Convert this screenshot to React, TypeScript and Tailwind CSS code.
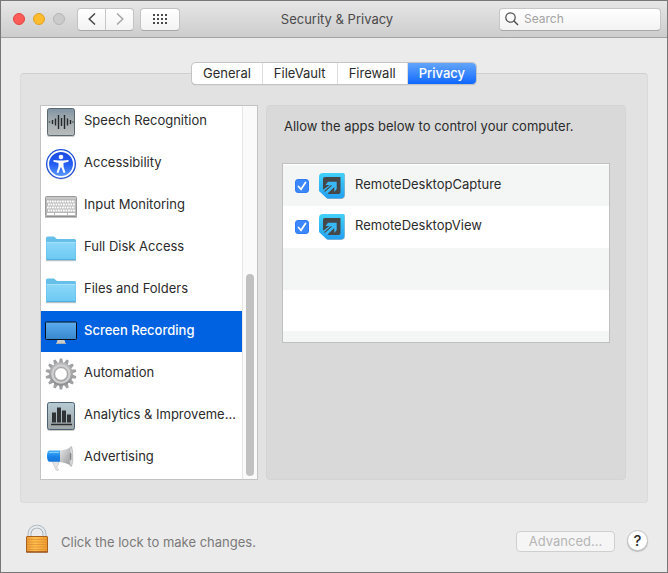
import { useState } from 'react';
import type { ReactNode } from 'react';
import clsx from 'clsx';

const SpeechIcon = (): ReactNode => (
  <svg width="32" height="32" viewBox="0 0 32 32" aria-hidden="true">
    <defs>
      <linearGradient id="speech-bg" x1="0" y1="0" x2="0" y2="1">
        <stop offset="0" stopColor="#7d93a6" />
        <stop offset="0.3" stopColor="#9aa5ab" />
        <stop offset="1" stopColor="#b9bcbc" />
      </linearGradient>
    </defs>
    <rect x="2" y="3" width="28" height="28" rx="2" fill="#000" opacity="0.2" />
    <rect x="2.5" y="2.5" width="27" height="27" rx="2" fill="url(#speech-bg)" stroke="#5b6870" />
    <path
      d="M4.5 15.5v1M7.500 14v4M10.500 12.500v7M13.500 9v14M16.500 12v8M19.500 9v14M22.500 12.500v7M25.500 14v4M28 15.500v1"
      stroke="#24282b"
      strokeWidth="1.400"
    />
  </svg>
);

const AccessibilityIcon = (): ReactNode => (
  <svg width="32" height="32" viewBox="0 0 32 32" aria-hidden="true">
    <defs>
      <linearGradient id="access-bg" x1="0" y1="0" x2="0" y2="1">
        <stop offset="0" stopColor="#1a4ce0" />
        <stop offset="0.5" stopColor="#235cf2" />
        <stop offset="1" stopColor="#5b9cff" />
      </linearGradient>
    </defs>
    <circle cx="16" cy="17" r="14.500" fill="#000" opacity="0.2" />
    <circle cx="16" cy="16" r="15" fill="#2252d6" />
    <circle cx="16" cy="16" r="12.800" fill="url(#access-bg)" stroke="#fff" strokeWidth="1.700" />
    <circle cx="16" cy="9" r="2.300" fill="#fff" />
    <path
      d="M8.500 11.900l5.500 0.600h4l5.500-0.600v1.800l-5 1.200v3.600l1.900 6-1.800 0.600-2.200-5.600h-0.800l-2.200 5.600-1.800-0.600 1.900-6v-3.600l-5-1.200z"
      fill="#fff"
    />
  </svg>
);

const KeyboardIcon = (): ReactNode => (
  <svg width="32" height="32" viewBox="0 0 32 32" aria-hidden="true">
    <rect x="0.500" y="6.500" width="31" height="20" rx="1" fill="#b9b9b9" stroke="#999" />
    <path d="M1 8h30" stroke="#c6c6c6" strokeWidth="2" />
    <path d="M0 27h32" stroke="#808080" />
    <path
      d="M2 11.500h28M3 14.500h27M2 17.500h28M3 20.500h27"
      stroke="#fff"
      strokeWidth="2"
      strokeDasharray="1.800 0.700"
    />
    <path d="M2 24h7M10 24h12M23 24h7" stroke="#fff" strokeWidth="2.200" />
  </svg>
);

const FolderIcon = ({ id }: { id: string }): ReactNode => (
  <svg width="32" height="32" viewBox="0 0 32 32" aria-hidden="true">
    <defs>
      <linearGradient id={id} x1="0" y1="0" x2="0" y2="1">
        <stop offset="0" stopColor="#8bd7f8" />
        <stop offset="1" stopColor="#6cc9f3" />
      </linearGradient>
    </defs>
    <path d="M1 28.500h30" stroke="#b5c4cb" strokeWidth="1.500" />
    <path
      d="M1 27V6q0-1.500 1.500-1.500h6q1 0 1.700 0.900l0.700 0.900q0.600 0.700 1.600 0.700H29.500q1.500 0 1.500 1.500V27q0 1-1 1H2q-1 0-1-1z"
      fill="#65bfe8"
    />
    <path d="M1.500 10.500h29v16q0 1-1 1h-27q-1 0-1-1z" fill={`url(#${id})`} />
    <path d="M1.500 10.500h29" stroke="#a5e1fb" />
    <path d="M1.500 27.500h29" stroke="#4faedb" />
  </svg>
);

const DisplayIcon = (): ReactNode => (
  <svg width="32" height="32" viewBox="0 0 32 32" aria-hidden="true">
    <defs>
      <linearGradient id="display-bg" x1="0" y1="0" x2="0" y2="1">
        <stop offset="0" stopColor="#5cacee" />
        <stop offset="1" stopColor="#3787cd" />
      </linearGradient>
    </defs>
    <path d="M12.500 24h7l1 3.500h-9z" fill="#c9cbcd" />
    <path d="M11 27.500h10" stroke="#a8adb2" />
    <rect x="0.500" y="6" width="31" height="17.500" rx="1" fill="url(#display-bg)" stroke="#06101c" />
  </svg>
);

const TEETH = Array.from({ length: 14 }, (_, i) => (i * 360) / 14);

const GearIcon = (): ReactNode => (
  <svg width="32" height="32" viewBox="0 0 32 32" aria-hidden="true">
    <defs>
      <linearGradient id="gear-bg" x1="0" y1="0" x2="0" y2="1">
        <stop offset="0" stopColor="#b9b9ba" />
        <stop offset="1" stopColor="#8f9092" />
      </linearGradient>
    </defs>
    <g fill="#a0a1a3">
      {TEETH.map((angle) => (
        <path key={angle} d="M13.600 6L14.800 0.500h2.400L18.400 6z" transform={`rotate(${angle} 16 16)`} />
      ))}
    </g>
    <circle cx="16" cy="16" r="9.300" fill="none" stroke="url(#gear-bg)" strokeWidth="5" />
    <circle cx="16" cy="16" r="8.600" fill="none" stroke="#cfcfd0" strokeWidth="2.400" />
    <circle cx="16" cy="16" r="6.400" fill="#fff" stroke="#8b8b8d" strokeWidth="0.900" />
  </svg>
);

const AnalyticsIcon = (): ReactNode => (
  <svg width="32" height="32" viewBox="0 0 32 32" aria-hidden="true">
    <defs>
      <linearGradient id="analytics-bg" x1="0" y1="0" x2="0" y2="1">
        <stop offset="0" stopColor="#b6cbd3" />
        <stop offset="1" stopColor="#9fa5a6" />
      </linearGradient>
    </defs>
    <rect x="2" y="3" width="28" height="28" rx="2" fill="#000" opacity="0.2" />
    <rect x="2.500" y="2.500" width="27" height="27" rx="2" fill="url(#analytics-bg)" stroke="#4d6278" />
    <path d="M7 22.500V12.500h4v10M12 22.500V7.500h4v15M17 22.500V10.500h4v12M22 22.500V14.500h4v8" fill="#303336" />
    <path d="M6 24.500h21" stroke="#2a2d2f" strokeWidth="1.500" />
  </svg>
);

const MegaphoneIcon = (): ReactNode => (
  <svg width="32" height="32" viewBox="0 0 32 32" aria-hidden="true">
    <defs>
      <linearGradient id="mega-body" x1="0" y1="0" x2="0" y2="1">
        <stop offset="0" stopColor="#45b0fa" />
        <stop offset="0.6" stopColor="#1681e8" />
        <stop offset="1" stopColor="#1c78d8" />
      </linearGradient>
      <linearGradient id="mega-horn" x1="0" y1="0" x2="1" y2="1">
        <stop offset="0" stopColor="#eeeeef" />
        <stop offset="1" stopColor="#909194" />
      </linearGradient>
    </defs>
    <path d="M7 19l4 9q1 1 2.500 0l-2-4 2-1v-4z" fill="#e3e4e5" stroke="#b5b6b8" strokeWidth="0.500" />
    <path d="M14 8.500q8-0.500 13-4v20q-5-4-13-4.500z" fill="url(#mega-horn)" />
    <path d="M4 8.500h11v11.200H4q-2-1-2-5.600t2-5.600z" fill="url(#mega-body)" />
    <path d="M4 10.500h10" stroke="#84cdfd" />
    <ellipse cx="26" cy="14.500" rx="1.800" ry="10" fill="#d6d7d8" stroke="#a6a7a9" strokeWidth="0.600" />
    <ellipse cx="25.500" cy="14.500" rx="0.900" ry="4" fill="#858689" />
  </svg>
);

const LockIcon = (): ReactNode => (
  <svg width="24" height="30" viewBox="0 0 24 30" aria-hidden="true">
    <defs>
      <linearGradient id="lock-body" x1="0" y1="0" x2="1" y2="0">
        <stop offset="0" stopColor="#eb9a35" />
        <stop offset="0.4" stopColor="#ffc052" />
        <stop offset="1" stopColor="#ee9a30" />
      </linearGradient>
    </defs>
    <path d="M4.500 13V10a7.500 7.500 0 0 1 15 0v3" fill="none" stroke="#8b98a3" strokeWidth="3.600" />
    <path d="M4.500 13V10a7.500 7.500 0 0 1 15 0v3" fill="none" stroke="#e3e9ed" strokeWidth="2.400" />
    <rect x="1.500" y="12.500" width="21" height="15.500" rx="0.500" fill="url(#lock-body)" stroke="#a9611c" />
    <path d="M2 15.500h20M2 18h20M2 20.500h20M2 23h20M2 25.500h20" stroke="#dc8c2b" strokeWidth="0.700" />
    <path d="M1 28h22" stroke="#8b4516" />
  </svg>
);

const RemoteDesktopIcon = ({ id }: { id: string }): ReactNode => (
  <svg width="26" height="26" viewBox="0 0 26 26" aria-hidden="true">
    <defs>
      <linearGradient id={id} x1="0" y1="0" x2="0" y2="1">
        <stop offset="0" stopColor="#42d1fa" />
        <stop offset="1" stopColor="#229ff0" />
      </linearGradient>
    </defs>
    <path d="M5 1h20q1 0 1 1v20q0 4-4 4H9L1 18V5q0-4 4-4z" fill="#000" opacity="0.250" />
    <path d="M4 0h20.500q1 0 1 1v20.500q0 4-4 4H8L0 18V4q0-4 4-4z" fill={`url(#${id})`} />
    <path d="M6 4h15.500v15q0 2-2 2H9.500L4 16V6q0-2 2-2z" fill="#454749" />
    <path d="M6.500 12L9 8.700h8.700v7.300L15.300 19v-5L8.500 20.500 4 17l6.500-5z" fill="#38b8f6" />
    <path d="M5.500 18.500l7-6.200" stroke="#454749" strokeWidth="1.100" />
  </svg>
);

const SearchIcon = (): ReactNode => (
  <svg width="14" height="14" viewBox="0 0 14 14" fill="none" stroke="#4d4d4d" aria-hidden="true">
    <circle cx="5.500" cy="5.500" r="4.700" strokeWidth="1.200" />
    <path d="M9 9l4 4" strokeWidth="1.500" />
  </svg>
);

const SECTIONS: { name: string; icon: ReactNode }[] = [
  { name: 'Speech Recognition', icon: <SpeechIcon /> },
  { name: 'Accessibility', icon: <AccessibilityIcon /> },
  { name: 'Input Monitoring', icon: <KeyboardIcon /> },
  { name: 'Full Disk Access', icon: <FolderIcon id="folder-disk" /> },
  { name: 'Files and Folders', icon: <FolderIcon id="folder-files" /> },
  { name: 'Screen Recording', icon: <DisplayIcon /> },
  { name: 'Automation', icon: <GearIcon /> },
  { name: 'Analytics & Improveme...', icon: <AnalyticsIcon /> },
  { name: 'Advertising', icon: <MegaphoneIcon /> },
];

const TABS = ['General', 'FileVault', 'Firewall', 'Privacy'];
const APPS = ['RemoteDesktopCapture', 'RemoteDesktopView'];

const TitleBar = (): ReactNode => (
  <header className="grid h-[37px] shrink-0 grid-cols-[1fr_auto_1fr] items-center border-b border-[#a3a3a3] bg-linear-to-b from-[#e6e6e6] to-[#cdcdcd] pr-1.5 pl-3">
    <div className="flex items-center">
      <div className="flex gap-2">
        <button aria-label="Close" className="size-3 rounded-full border border-[#e2443f] bg-[#fc5b57]" />
        <button aria-label="Minimize" className="size-3 rounded-full border border-[#e0a02a] bg-[#fdbc2e]" />
        <button aria-label="Zoom" disabled className="size-3 rounded-full border border-[#b5b5b5] bg-[#cbcbcb]" />
      </div>
      <div className="ml-3 flex h-[23px] divide-x divide-[#c6c6c6] rounded border border-[#c3c3c3] border-b-[#a8a8a8] bg-linear-to-b from-white to-[#f3f3f3]">
        <button aria-label="Back" className="flex w-7 items-center justify-center">
          <svg width="8" height="12" viewBox="0 0 8 12" fill="none" stroke="#474747" strokeWidth="1.500">
            <path d="M7 0.500L1.200 6 7 11.500" />
          </svg>
        </button>
        <button aria-label="Forward" disabled className="flex w-[27px] items-center justify-center">
          <svg width="8" height="12" viewBox="0 0 8 12" fill="none" stroke="#a6a6a6" strokeWidth="1.500">
            <path d="M1 0.500L6.800 6 1 11.500" />
          </svg>
        </button>
      </div>
      <button
        aria-label="Show All"
        className="ml-1.5 flex h-[23px] w-10 items-center justify-center rounded border border-[#c3c3c3] border-b-[#a8a8a8] bg-linear-to-b from-white to-[#f3f3f3]"
      >
        <svg width="14" height="10" viewBox="0 0 14 10" stroke="#4a4a4a" strokeWidth="2" strokeDasharray="2 2">
          <path d="M0 1h14M0 5h14M0 9h14" />
        </svg>
      </button>
    </div>
    <h1 className="pt-0.5 text-[13px] text-[#4a4a4a]">Security &amp; Privacy</h1>
    <label className="flex h-[23px] w-[162px] items-center gap-[5px] justify-self-end rounded border border-[#c6c6c6] border-b-[#a8a8a8] bg-linear-to-b from-white to-[#f3f3f3] px-[5px]">
      <SearchIcon />
      <input
        type="search"
        aria-label="Search"
        placeholder="Search"
        className="min-w-0 flex-1 bg-transparent text-xs outline-none placeholder:text-[#a3a3a3]"
      />
    </label>
  </header>
);

const App = (): ReactNode => {
  const [tab, setTab] = useState('Privacy');
  const [section, setSection] = useState('Screen Recording');
  const [allowed, setAllowed] = useState<string[]>(APPS);

  const toggle = (name: string): void =>
    setAllowed((prev) => (prev.includes(name) ? prev.filter((n) => n !== name) : [...prev, name]));

  return (
    <div className="flex min-h-screen flex-col border border-[#777] bg-[#ebebeb] font-[Inter,'Liberation_Sans',sans-serif] text-[13px] text-[#2b2b2b]">
      <TitleBar />

      <main className="flex flex-1 flex-col px-[19px] pt-[25px]">
        <div
          role="tablist"
          className="z-10 -mb-[11px] flex h-[21px] self-center rounded bg-white shadow-[0_0_0_1px_#c4c4c4,0_1px_1px_#999]"
        >
          {TABS.map((name) => (
            <button
              key={name}
              role="tab"
              aria-selected={tab === name}
              onClick={() => setTab(name)}
              className={clsx(
                'px-[11px] first:rounded-l last:rounded-r',
                tab === name
                  ? 'bg-linear-to-b from-[#62a5fb] to-[#0a66fd] font-medium text-white'
                  : 'border-r border-[#dcdcdc]',
              )}
            >
              {name}
            </button>
          ))}
        </div>

        <section className="flex flex-1 gap-2 rounded border border-[#dadada] border-t-[#cfcfcf] bg-[#e2e2e2] pt-[31px] pr-[21px] pb-[22px] pl-[19px]">
          <div className="flex h-[375px] w-[218px] shrink-0 border border-[#c3c3c3] bg-white">
            <ul className="flex min-w-0 flex-1 flex-col justify-end overflow-hidden">
              {SECTIONS.map(({ name, icon }) => (
                <li key={name} className="h-[42px] shrink-0 pb-px">
                  <button
                    onClick={() => setSection(name)}
                    className={clsx(
                      'flex h-full w-full items-center gap-[7px] pl-1 text-left whitespace-nowrap',
                      section === name && 'bg-[#0062e1] font-medium text-white',
                    )}
                  >
                    <span className="shrink-0">{icon}</span>
                    <span className="pb-0.5">{name}</span>
                  </button>
                </li>
              ))}
            </ul>
            <div className="flex w-[15px] flex-col justify-end border-l border-[#e6e6e6] bg-[#fafafa] px-[3px] pb-[3px]">
              <div className="h-[202px] rounded-full bg-[#c1c1c1]" />
            </div>
          </div>

          <div className="flex-1 rounded border border-[#d4d4d4] bg-[#d9d9d9] px-[15px] pt-[11px]">
            <p className="h-[46px] pl-0.5 leading-[18px]">Allow the apps below to control your computer.</p>
            <ul className="h-[180px] overflow-hidden border border-[#bfbfbf] bg-white pt-px">
              {APPS.map((name) => (
                <li key={name} className="h-[42px] first:h-[41px] odd:bg-[#f4f5f5]">
                  <label className="flex h-full items-center pl-3">
                    <span className="grid place-items-center">
                      <input
                        type="checkbox"
                        checked={allowed.includes(name)}
                        onChange={() => toggle(name)}
                        className="peer col-start-1 row-start-1 size-3.5 appearance-none rounded-[3px] border border-[#b5b5b5] bg-white checked:border-[#2f7cf6] checked:bg-[#3b87fb]"
                      />
                      <svg
                        width="14"
                        height="14"
                        viewBox="0 0 14 14"
                        className="pointer-events-none invisible col-start-1 row-start-1 peer-checked:visible"
                      >
                        <path d="M3.500 7.500L6 10.300 10.500 3.500" fill="none" stroke="#fff" strokeWidth="1.700" strokeLinecap="round" />
                      </svg>
                    </span>
                    <span className="mr-2.5 ml-2.5">
                      <RemoteDesktopIcon id={`app-${name}`} />
                    </span>
                    <span className="pb-0.5">{name}</span>
                  </label>
                </li>
              ))}
              <li className="h-[42px] bg-[#f4f5f5]" />
              <li className="h-[41px]" />
              <li className="h-[42px] bg-[#f4f5f5]" />
            </ul>
          </div>
        </section>

        <footer className="flex h-[69px] items-center">
          <button aria-label="Unlock" className="ml-[5px] pt-0.5">
            <LockIcon />
          </button>
          <p className="ml-3 flex-1 pt-2.5 text-[#7a7a7a]">Click the lock to make changes.</p>
          <button
            disabled
            className="mt-[7px] h-[21px] w-[99px] rounded border border-[#cfcfcf] bg-[#f5f5f5] text-[#b5b5b5]"
          >
            Advanced...
          </button>
          <button
            aria-label="Help"
            className="mt-1.5 ml-3 size-[21px] rounded-full border border-[#c3c3c3] bg-white text-[15px] leading-none font-medium shadow-[0_1px_1px_#bbb]"
          >
            ?
          </button>
        </footer>
      </main>
    </div>
  );
};

export default App;
